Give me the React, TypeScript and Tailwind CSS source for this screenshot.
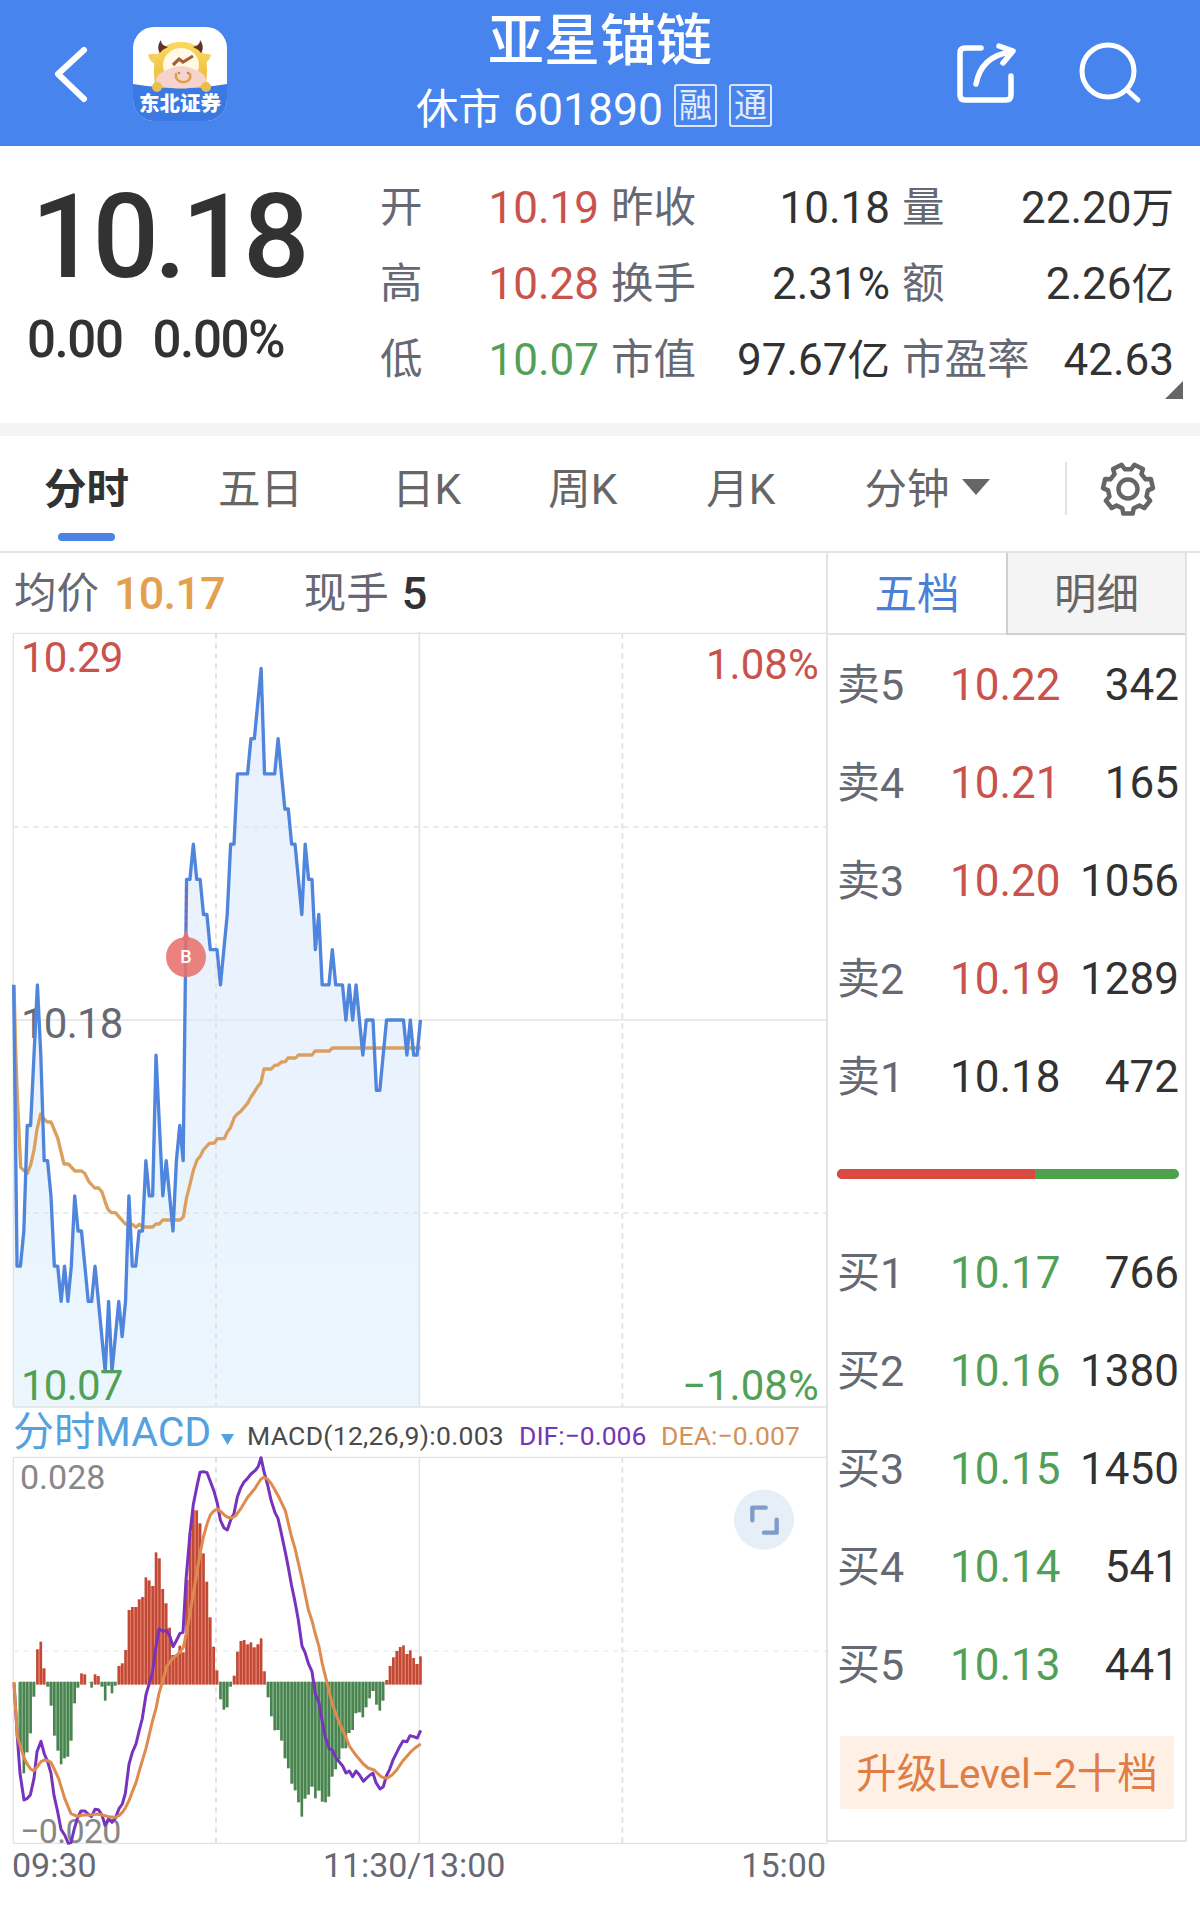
import { ReactNode } from 'react';

type Tone = 'up' | 'down' | 'flat';

const toneClass: Record<Tone, string> = {
  up: 'text-[#c9524c]',
  down: 'text-[#52a057]',
  flat: 'text-[#323232]',
};

interface Quote {
  label: string;
  value: string;
  unit?: string;
  tone: Tone;
}

const quoteColumns: { className: string; items: Quote[] }[] = [
  {
    className: 'w-[219px]',
    items: [
      { label: '开', value: '10.19', tone: 'up' },
      { label: '高', value: '10.28', tone: 'up' },
      { label: '低', value: '10.07', tone: 'down' },
    ],
  },
  {
    className: 'w-[279px]',
    items: [
      { label: '昨收', value: '10.18', tone: 'flat' },
      { label: '换手', value: '2.31%', tone: 'flat' },
      { label: '市值', value: '97.67', unit: '亿', tone: 'flat' },
    ],
  },
  {
    className: 'w-[272px]',
    items: [
      { label: '量', value: '22.20', unit: '万', tone: 'flat' },
      { label: '额', value: '2.26', unit: '亿', tone: 'flat' },
      { label: '市盈率', value: '42.63', tone: 'flat' },
    ],
  },
];

const asks: [string, string, string, Tone][] = [
  ['卖5', '10.22', '342', 'up'],
  ['卖4', '10.21', '165', 'up'],
  ['卖3', '10.20', '1056', 'up'],
  ['卖2', '10.19', '1289', 'up'],
  ['卖1', '10.18', '472', 'flat'],
];

const bids: [string, string, string, Tone][] = [
  ['买1', '10.17', '766', 'down'],
  ['买2', '10.16', '1380', 'down'],
  ['买3', '10.15', '1450', 'down'],
  ['买4', '10.14', '541', 'down'],
  ['买5', '10.13', '441', 'down'],
];

// price per minute, in cents away from the previous close
const prices = [
  1, -7, -7, -6, -3, -3, -1, 1, -1, -4, -4, -5, -7, -7, -8, -7, -8, -7, -5, -6,
  -6, -7, -8, -8, -7, -8, -9, -10, -8, -10, -9, -8, -9, -8, -5, -7, -7, -6, -6, -4,
  -5, -5, -1, -3, -5, -4, -5, -6, -4, -3, -4, 4, 4, 5, 4, 4, 3, 3, 2, 2,
  2, 1, 2, 3, 5, 5, 7, 7, 7, 7, 8, 8, 9, 10, 7, 7, 7, 7, 8, 7,
  6, 6, 5, 5, 4, 3, 5, 4, 4, 2, 3, 1, 1, 1, 2, 1, 1, 1, 0, 1,
  0, 1, 0, -1, 0, 0, 0, -2, -2, -1, 0, 0, 0, 0, 0, 0, -1, 0, -1, -1, 0,
];

// top/bottom of every MACD bar, the zero line is at 850
const bars = [
  850, 1000, 1045, 1120, 1057, 1000, 890, 748, 725, 805, 860, 917, 1007, 1052, 1093, 1075, 1070, 1022, 910, 863,
  820, 823, 850, 863, 823, 828, 860, 902, 857, 880, 857, 798, 790, 750, 630, 621, 621, 598, 591, 532,
  541, 558, 457, 475, 567, 610, 683, 765, 765, 737, 757, 540, 400, 330, 331, 370, 460, 545, 652, 740,
  811, 898, 929, 922, 860, 827, 755, 723, 720, 733, 727, 742, 733, 715, 814, 892, 949, 991, 990, 1022,
  1075, 1105, 1151, 1171, 1207, 1250, 1196, 1184, 1160, 1195, 1172, 1205, 1207, 1190, 1130, 1108, 1078, 1045, 1045, 999,
  990, 940, 937, 952, 922, 895, 873, 914, 932, 902, 840, 798, 772, 753, 741, 736, 762, 751, 774, 792, 769,
];

const avgLine =
  '42,-45 47,150 52,290 62,502 71,511 82,520 92,495 102,450 111,388 122,342 132,357 142,366 153,366 173,414 192,492 205,492 225,513 245,513 254,520 266,544 284,564 296,564 306,576 315,604 324,628 334,638 346,638 376,672 397,673 408,682 418,673 428,681 458,681 468,672 478,672 488,660 540,660 550,651 560,592 570,553 580,511 591,480 600,470 610,450 628,430 643,429 652,416 673,416 682,396 691,384 703,352 712,342 722,334 742,311 753,291 763,276 773,260 783,248 792,207 814,207 824,196 834,195 844,186 856,185 864,174 887,174 895,165 936,165 945,153 988,153 997,144 1262,144';

const difLine =
  '42,850 52,1010 60,1120 72,1200 82,1195 91,1185 102,1135 111,1055 123,1024 133,1062 143,1085 153,1120 162,1186 173,1235 183,1288 194,1305 205,1330 213,1328 222,1290 232,1255 243,1233 255,1233 264,1242 274,1250 285,1228 295,1229 306,1245 315,1276 326,1256 336,1267 346,1255 357,1226 367,1212 376,1180 387,1093 397,1057 408,1032 418,990 427,955 438,884 448,850 457,820 468,740 477,687 489,694 500,691 510,710 519,740 529,722 540,700 549,697 558,540 570,400 580,313 591,258 600,217 610,215 621,218 632,247 643,277 652,310 661,360 672,384 682,390 692,360 702,340 712,291 722,264 732,246 742,236 753,222 766,211 775,199 783,173 792,215 803,255 813,300 825,338 834,355 844,400 855,452 864,497 874,553 885,605 895,660 906,738 915,757 925,790 936,815 946,882 957,908 967,966 977,1015 988,1046 997,1050 1007,1072 1018,1086 1028,1098 1038,1119 1048,1113 1058,1130 1068,1113 1078,1124 1090,1144 1100,1134 1110,1125 1119,1120 1128,1148 1140,1167 1150,1160 1159,1128 1169,1108 1179,1080 1189,1060 1199,1040 1209,1023 1221,1025 1230,1007 1241,1010 1252,1014 1262,991';

const deaLine =
  '42,846 47,930 52,1010 62,1042 72,1073 82,1093 91,1106 101,1112 111,1101 123,1085 133,1080 143,1082 153,1087 164,1110 176,1136 194,1195 213,1241 232,1249 250,1245 270,1245 290,1242 306,1245 326,1250 346,1252 357,1247 367,1237 376,1224 387,1202 397,1175 408,1148 418,1112 438,1045 457,965 468,925 477,880 489,840 500,800 510,785 519,775 529,766 540,756 550,742 560,695 570,640 580,580 591,515 600,462 610,412 621,372 631,345 641,333 652,327 663,335 673,345 683,352 694,354 706,348 715,336 725,322 742,293 763,268 783,237 792,232 802,237 813,250 825,270 836,290 856,332 865,370 874,408 885,445 906,537 925,629 936,662 946,702 957,740 967,792 977,832 997,913 1018,969 1028,990 1038,1012 1048,1038 1068,1066 1090,1092 1104,1104 1122,1110 1140,1127 1150,1133 1162,1134 1175,1126 1190,1110 1209,1082 1230,1058 1245,1044 1262,1032';

const xOf = (i: number) => 41 + i * 10.17;
const pricePoints = prices.map((c, i) => `${xOf(i).toFixed(1)},${(1164 - c * 105.5).toFixed(1)}`).join(' ');

const gearPath = (() => {
  const pts: string[] = [];
  for (let i = 0; i < 7; i++) {
    const mid = Math.PI / 2 + (i * Math.PI * 2) / 7;
    [
      [-0.29, 20],
      [-0.19, 25],
      [0.19, 25],
      [0.29, 20],
    ].forEach(([da, r]) => pts.push(`${(30 + r * Math.cos(mid + da)).toFixed(2)} ${(30 + r * Math.sin(mid + da)).toFixed(2)}`));
  }
  return `M${pts.join('L')}Z`;
})();

function AppLogo() {
  return (
    <svg className="h-[94px] w-[94px]" viewBox="0 0 94 94">
      <defs>
        <clipPath id="logo">
          <rect width="94" height="94" rx="21" />
        </clipPath>
        <linearGradient id="hide" x1="0" y1="0" x2="0" y2="1">
          <stop offset="0" stopColor="#fbd95c" />
          <stop offset="1" stopColor="#e9b93f" />
        </linearGradient>
      </defs>
      <g clipPath="url(#logo)">
        <rect width="94" height="94" fill="#fff" />
        <path d="M0 57Q47 65 94 57V94H0Z" fill="#3a78e2" />
        <path d="M15 28Q21 25 28 29L25 38Q17 36 15 28ZM78 28Q72 25 65 29L68 38Q76 36 78 28Z" fill="#f4cf5e" />
        <path d="M21 46C20 25 31 15 48 15S75 25 74 46L73 61H22Z" fill="url(#hide)" />
        <path d="M28 13C24 18 25 24 27 26Q30 22 35 20C31 19 28 17 28 13ZM67 13C71 18 70 24 68 26Q65 22 60 20C64 19 67 17 67 13Z" fill="#5f332a" />
        <ellipse cx="48" cy="38" rx="18" ry="17" fill="#fff9e6" />
        <path d="M40 38L46 32L50 35L60 29" fill="none" stroke="#a4603b" strokeWidth="3.2" />
        <path d="M23 54C23 46 32 44 38 41Q48 37 58 41C65 44 73 46 73 54C73 64 23 64 23 54Z" fill="#f6d3cb" />
        <path d="M43 47C41 58 60 58 57 47" fill="none" stroke="#dfa047" strokeWidth="2.5" strokeLinecap="round" />
        <circle cx="46" cy="46" r="1.2" fill="#b98660" />
        <circle cx="55" cy="46" r="1.2" fill="#b98660" />
        <circle cx="24" cy="60" r="5" fill="#e8bf4d" />
        <circle cx="73" cy="60" r="5" fill="#e8bf4d" />
        <text x="47" y="84" textAnchor="middle" fontSize="20.5" fontWeight="900" fill="#fff">
          东北证券
        </text>
      </g>
    </svg>
  );
}

function Header() {
  return (
    <header className="flex h-[146px] items-start bg-[#4884ed] text-white">
      <svg className="mt-[44px] ml-[49px] h-[60px] w-[44px]" viewBox="0 0 44 60" fill="none" stroke="#fff" strokeWidth="6" strokeLinecap="round" strokeLinejoin="round">
        <path d="M35 6L9 30L35 55" />
      </svg>
      <div className="mt-[27px] ml-[40px]">
        <AppLogo />
      </div>
      <div className="ml-[173px] flex w-[400px] flex-col items-center">
        <h1 className="mt-[12px] text-[56px] leading-[58px] font-medium">亚星锚链</h1>
        <div className="mt-[10px] flex items-start self-start pl-[16px]">
          <span className="text-[42.5px] leading-[60px]">休市</span>
          <span className="ml-[12px] text-[44.5px] leading-[60px]">601890</span>
          <Badge className="ml-[11px]">融</Badge>
          <Badge className="ml-[12px]">通</Badge>
        </div>
      </div>
      <svg className="mt-[42px] ml-[154px] h-[64px] w-[64px]" viewBox="0 0 64 64" fill="none" stroke="#fff" strokeWidth="5.5" strokeLinecap="round" strokeLinejoin="round">
        <path d="M27 6H11Q6 6 6 11V53Q6 58 11 58H52Q57 58 57 53V34" />
        <path d="M22 42C25 26 35 13 57 10M45 4L59 9L49 21" />
      </svg>
      <svg className="mt-[39px] ml-[58px] h-[68px] w-[68px]" viewBox="0 0 68 68" fill="none" stroke="#fff" strokeWidth="5" strokeLinecap="round">
        <circle cx="32" cy="32" r="26" />
        <path d="M51 51L62 61" />
      </svg>
    </header>
  );
}

function Badge({ className, children }: { className: string; children: ReactNode }) {
  return (
    <span className={`mt-[4px] flex h-[43px] w-[43px] items-center justify-center rounded-[3px] border-2 border-white/80 text-[33px] leading-none text-white/85 ${className}`}>
      {children}
    </span>
  );
}

function Summary() {
  return (
    <section className="flex h-[277px]">
      <div className="w-[380px] text-[#323232]">
        <div className="mt-[31px] pl-[31px] text-[117px] leading-[120px] font-medium tracking-[-5px]">10.18</div>
        <div className="mt-[13px] flex gap-[30px] pl-[27px] text-[51px] leading-[60px] font-medium tracking-[-1.4px]">
          <span>0.00</span>
          <span>0.00%</span>
        </div>
      </div>
      <div className="relative flex gap-[12px] pt-[24px]">
        {quoteColumns.map(col => (
          <div key={col.items[0].label} className={col.className}>
            {col.items.map(q => (
              <div key={q.label} className="flex h-[76px] items-center justify-between leading-[60px]">
                <span className="text-[42.5px] text-[#666974]">{q.label}</span>
                <span className={`text-[44px] ${toneClass[q.tone]}`}>
                  {q.value}
                  {q.unit && <span className="text-[42.5px]">{q.unit}</span>}
                </span>
              </div>
            ))}
          </div>
        ))}
        <svg className="absolute top-[235px] left-[785px] h-[18px] w-[18px]" viewBox="0 0 18 18">
          <path d="M18 0V18H0Z" fill="#666" />
        </svg>
      </div>
    </section>
  );
}

function PeriodTabs() {
  return (
    <nav className="flex h-[117px] items-start border-b-2 border-[#e3e3e3] pt-[24px] pl-[44px] text-[42.5px] leading-[60px] text-[#666]">
      <div className="flex w-[85px] flex-col items-center font-bold text-[#323232]">
        <span>分时</span>
        <span className="mt-[13px] h-[8px] w-[57px] rounded-full bg-[#4a84e4]" />
      </div>
      <span className="ml-[89px]">五日</span>
      <span className="ml-[89px]">日K</span>
      <span className="ml-[87px]">周K</span>
      <span className="ml-[89px]">月K</span>
      <span className="ml-[89px]">分钟</span>
      <svg className="mt-[19px] ml-[12px] h-[16px] w-[28px]" viewBox="0 0 28 16">
        <path d="M0 0H28L14 16Z" fill="#666" />
      </svg>
      <span className="mt-[2px] ml-[75px] h-[53px] w-[2px] bg-[#e3e3e3]" />
      <svg className="-mt-px ml-[31px] h-[60px] w-[60px]" viewBox="0 0 60 60" fill="none" stroke="#666" strokeWidth="4.5" strokeLinejoin="round">
        <path d={gearPath} />
        <circle cx="30" cy="30" r="9.5" />
      </svg>
    </nav>
  );
}

function PriceChart() {
  return (
    <svg className="block h-[776px] w-[828px]" viewBox="0 0 2484 2328" fill="none">
      <defs>
        <linearGradient id="area" x1="0" y1="0" x2="0" y2="1">
          <stop offset="0" stopColor="#e9f0fd" />
          <stop offset="1" stopColor="#ebf6fd" />
        </linearGradient>
      </defs>
      <polygon points={`41,2325 ${pricePoints} 1258,2325`} fill="url(#area)" />
      <g stroke="#e3e3e5" strokeWidth="4">
        <path d="M40 4H2484M40 2325H2484M40 4V2325" />
        <path d="M40 1164H2484M1258 0V2325" strokeWidth="5" />
        <path d="M40 585H2484M40 1743H2484" strokeDasharray="16 14" />
        <path d="M648 4V2325M1867 4V2325" strokeWidth="6" strokeDasharray="16 14" />
      </g>
      <text x="63" y="1218" fill="#666974" fontSize="126" textLength="307">10.18</text>
      <polyline points={avgLine} transform="translate(0 1104)" stroke="#dba060" strokeWidth="10" strokeLinejoin="round" />
      <polyline points={pricePoints} stroke="#4f85dc" strokeWidth="10" strokeLinejoin="round" />
      <g fontSize="126">
        <text x="63" y="120" fill="#c9524c" textLength="307">10.29</text>
        <text x="63" y="2303" fill="#52a057" textLength="307">10.07</text>
        <text x="2456" y="142" fill="#c9524c" textAnchor="end">1.08%</text>
        <text x="2456" y="2303" fill="#52a057" textAnchor="end">−1.08%</text>
      </g>
      {/* buy marker */}
      <g>
        <path d="M558 768V890" stroke="#c9405a" strokeWidth="3" strokeDasharray="12 9" />
        <path d="M545 925L558 893L571 925Z" fill="#e8716d" fillOpacity="0.9" />
        <circle cx="558" cy="975" r="60" fill="#e8716d" fillOpacity="0.88" />
        <text x="558" y="994" fill="#fff" fontSize="54" fontWeight="500" textAnchor="middle">B</text>
      </g>
    </svg>
  );
}

function MacdChart() {
  return (
    <svg className="block h-[390px] w-[828px]" viewBox="0 168 2484 1170" fill="none">
      <g stroke="#e3e3e5" strokeWidth="4">
        <path d="M40 172H2484M40 1330H2484M40 172V1330M1258 172V1330" />
        <path d="M40 753H2484" strokeDasharray="16 14" stroke="#eeeeee" />
        <path d="M648 172V1330M1867 172V1330" strokeWidth="6" strokeDasharray="16 14" />
      </g>
      <g fontSize="102" fill="#888">
        <text x="60" y="267" textLength="256">0.028</text>
        <text x="60" y="1328" textLength="304">−0.020</text>
      </g>
      {bars.map((y, i) => {
        const next = bars[i + 1];
        const up = y < 850;
        const joined = next !== undefined && up === next < 850;
        const shared = up ? Math.max(y, next) : Math.min(y, next);
        const dark = up ? '#c24a35' : '#4a8350';
        return (
          <g key={i} strokeWidth="8">
            {joined && i > 0 && <path d={`M${xOf(i) + 5} ${up ? 853 : 846}V${shared}`} stroke={up ? '#f08f80' : '#93c69a'} strokeWidth="4" />}
            {i > 1 && y !== 850 && <path d={`M${xOf(i)} ${up ? 854 : 845}V${y}`} stroke={dark} />}
          </g>
        );
      })}
      <polyline points={difLine} stroke="#7733bd" strokeWidth="9" strokeLinejoin="round" />
      <polyline points={deaLine} stroke="#de8b4e" strokeWidth="9" strokeLinejoin="round" />
      <g transform="translate(2292 359)">
        <circle r="90" fill="#e6eef8" />
        <path d="M-35 2V-36H5M38 0V39H0" stroke="#7f9cc8" strokeWidth="13" strokeLinecap="round" strokeLinejoin="round" />
      </g>
    </svg>
  );
}

function ChartPanel() {
  return (
    <div className="w-[826px]">
      <div className="flex h-[79px] items-center pt-[3px] pl-[14px] text-[42.5px] leading-[60px] text-[#666974]">
        <span>均价</span>
        <span className="ml-[15px] text-[45px] font-medium tracking-[-0.8px] text-[#e3a04f]">10.17</span>
        <span className="ml-[79px]">现手</span>
        <span className="ml-[13px] text-[45px] font-medium text-[#323232]">5</span>
      </div>
      <PriceChart />
      <div className="flex h-[48px] items-center pl-[13px] whitespace-nowrap text-[26.5px] text-[#4a4a4a]">
        <span className="w-[203px] text-[41px] leading-[48px] text-[#53a2df]">分时MACD</span>
        <svg className="mt-[14px] ml-[5px] h-[11px] w-[13px]" viewBox="0 0 13 11">
          <path d="M0 0H13L6.5 11Z" fill="#53a2df" />
        </svg>
        <span className="mt-[7px] ml-[13px] w-[272px] tracking-[0.3px]">MACD(12,26,9):0.003</span>
        <span className="mt-[7px] w-[142px]  text-[#7336b4]">DIF:−0.006</span>
        <span className="mt-[7px] tracking-[0.1px] text-[#d4905a]">DEA:−0.007</span>
      </div>
      <MacdChart />
      <div className="flex pl-[12px] text-[34px] leading-[38px] text-[#666974]">
        <span className="w-[311px]">09:30</span>
        <span className="tracking-[-0.1px]">11:30/13:00</span>
        <span className="ml-auto">15:00</span>
      </div>
    </div>
  );
}

function OrderRow({ row }: { row: [string, string, string, Tone] }) {
  const [label, price, volume, tone] = row;
  return (
    <div className="flex h-[98.1px] items-center pt-[3px] text-[44px] leading-[60px] text-[#323232]">
      <span className="w-[113px] text-[43px] text-[#666974]">{label}</span>
      <span className={toneClass[tone]}>{price}</span>
      <span className="ml-auto">{volume}</span>
    </div>
  );
}

function OrderBook() {
  return (
    <aside className="h-[1289px] w-[361px] border-x-2 border-b-2 border-[#e3e3e5]">
      <div className="flex h-[82px] text-[42.5px] leading-[84px]">
        <div className="w-[178px] border-b-2 border-[#e3e3e5] text-center text-[#4a80d8]">五档</div>
        <div className="flex-1 border-b-2 border-l-2 border-[#cfcfcf] bg-[#f4f4f4] text-center text-[#666]">明细</div>
      </div>
      <div className="-mt-px pr-[6px] pl-[9px]">
        {asks.map(row => (
          <OrderRow key={row[0]} row={row} />
        ))}
        <div className="flex h-[98.1px] items-center">
          <div className="flex h-[10px] w-[342px] overflow-hidden rounded-full bg-[#4ea24d]">
            <div className="w-[58%] bg-[#d94a43]" />
          </div>
        </div>
        {bids.map(row => (
          <OrderRow key={row[0]} row={row} />
        ))}
      </div>
      <div className="mt-[23px] ml-[12px] h-[73px] w-[334px] rounded-[3px] bg-[#fef0e4] text-center text-[40.5px] leading-[76px] whitespace-nowrap text-[#df7d45]">
        升级Level−2十档
      </div>
    </aside>
  );
}

export default function App() {
  return (
    <div className="h-[1916px] w-[1200px] overflow-hidden bg-white font-[family-name:Roboto,'Noto_Sans_CJK_SC',sans-serif]">
      <Header />
      <Summary />
      <div className="h-[13px] bg-[#f4f4f4]" />
      <PeriodTabs />
      <main className="flex">
        <ChartPanel />
        <OrderBook />
      </main>
    </div>
  );
}
